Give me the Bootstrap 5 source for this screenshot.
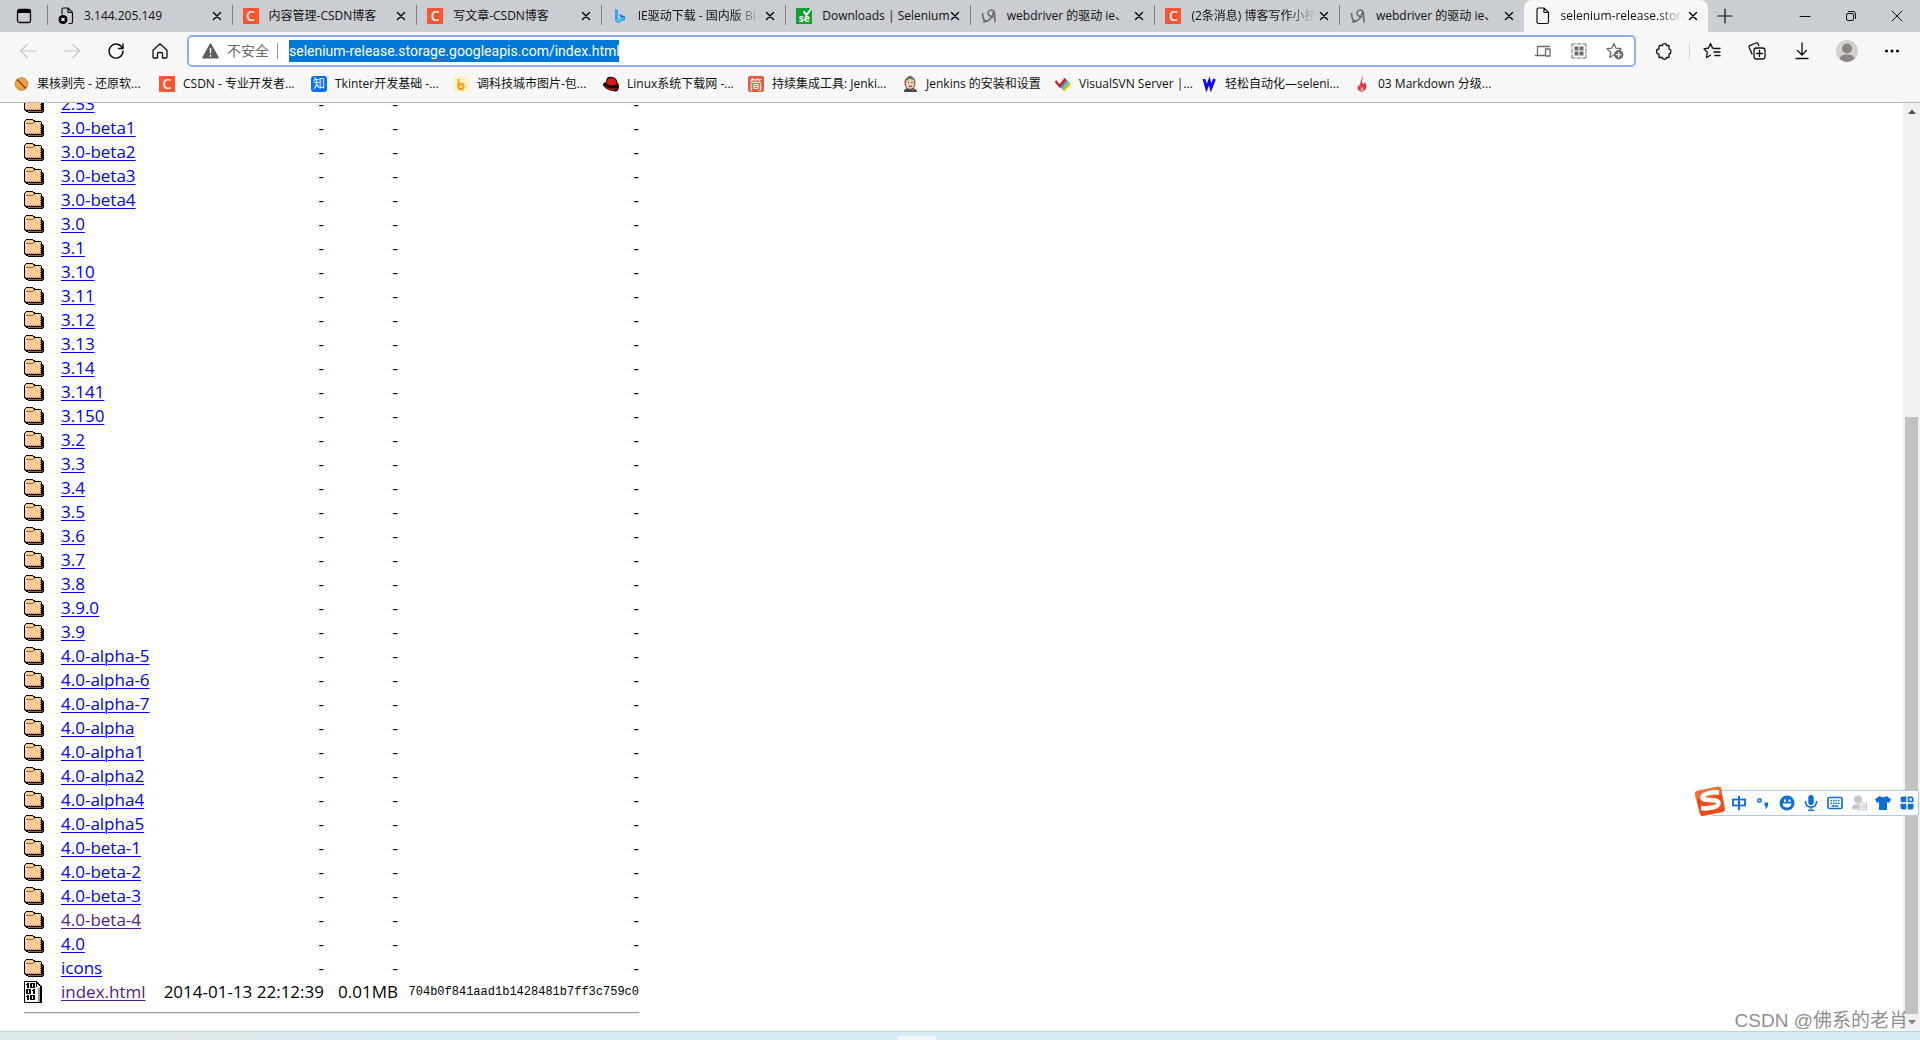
<!DOCTYPE html>
<html lang="zh-CN">
<head>
<meta charset="utf-8">
<meta name="viewport" content="width=device-width, initial-scale=1">
<title>selenium-release.storage.googleapis.com/index.html</title>
<link href="https://cdn.jsdelivr.net/npm/bootstrap@5.3.0/dist/css/bootstrap.min.css" rel="stylesheet">
<style>
  body { font: 12px/16px "Open Sans", "Noto Sans CJK SC", sans-serif; color: #111; background: #fff; }
  button { border: 0; background: none; padding: 0; color: #111; }
  svg { display: block; flex: none; }
  .ln { fill: none; stroke: currentColor; stroke-linecap: round; stroke-linejoin: round; }

  .tabstrip { height: 32px; background: #cacdd1; }
  .tab-menu { width: 47px; flex: none; }
  .tabs-row { flex: 1 1 0; min-width: 0; }
  .tab-item { flex: 1 1 0; min-width: 0; padding: 0 6px 0 10px; border-left: 1px solid transparent; position: relative; }
  .tab-item::before { content: ""; position: absolute; left: -1px; top: -2px; height: 20px; width: 1px; background: #7e8082; }
  .tab-item.current { background: #f7f7f7; border-radius: 8px 8px 0 0; height: 32px; }
  .tab-item.current::before { display: none; }
  .tab-title { flex: 1 1 0; min-width: 0; margin-left: 10px; white-space: nowrap; color: #111; text-decoration: none; }
  .tab-title.fade-end { -webkit-mask-image: linear-gradient(to right, #000 78%, transparent); mask-image: linear-gradient(to right, #000 78%, transparent); }
  .tab-close { width: 18px; height: 18px; flex: none; }
  .win-area { width: 212px; flex: none; }
  .win-area .new-tab { width: 34px; }
  .win-area .win-btn { width: 46px; }

  .toolbar { height: 38px; background: #f7f7f7; padding: 0 6px; }
  .tool-btn { width: 44px; height: 32px; display: flex; align-items: center; justify-content: center; flex: none; }
  .tool-btn:disabled { color: #c4c4c4; }
  .tool-gap { column-gap: 1px; }
  .address { height: 32px; margin: 0 5px; border: 2px solid #8fb0ea; border-radius: 5px; background: #fff; padding: 0 1px 0 13px; }
  .site-state { color: #6b6b6b; font-size: 14px; line-height: 20px; }
  .url-input { width: 330px; height: 22px; border: 0; padding: 0; background: #0078d7; color: #fff; font: 14px/22px Roboto, sans-serif; outline: 0; }
  .address .tool-btn { width: 36px; color: #6b6b6b; }
  .rule-v { width: 1px; height: 16px; background: #cfcfcf; }
  .rule-url { background: #9a9a9a; margin: 0 11px 0 8px; }

  .bookmarks { height: 33px; background: #f7f7f7; border-bottom: 1px solid #b9b9b9; padding: 0 14px 4px; display: grid; align-items: center;
    grid-template-columns: 145px 152px 142px 150px 145px 154px 153px 146px 153px 150px; }
  .bookmarks a { color: #111; text-decoration: none; white-space: nowrap; display: flex; align-items: center; gap: 8px; }
  .fav { width: 16px; height: 16px; flex: none; display: flex; align-items: center; justify-content: center; color: #fff; font: 14px/16px "Noto Sans", "Noto Sans CJK SC", sans-serif; }
  .fav-csdn { background: #fc5531; font-weight: 500; }
  .fav-zhi { background: #0a6cff; border-radius: 3px; font-size: 12px; }
  .fav-jian { background: #e4593f; border-radius: 2px; font-size: 13px; }
  .fav-se { background: #0fa12c; font-size: 10px; font-weight: 700; position: relative; padding-top: 4px; }
  .fav-se svg { position: absolute; right: 0; top: 0; }

  .viewport { min-height: 0; }
  .listing { min-height: 0; overflow: hidden; padding: 0 24px 17px; }
  .files { font: 17px/24px "Open Sans", "Noto Sans", sans-serif; color: #000; border-collapse: collapse; table-layout: fixed; width: 615px; flex: none; }
  .files td { padding: 0; height: 24px; white-space: nowrap; text-align: right; }
  .files td.ic { vertical-align: middle; }
  .files td.nm { text-align: left; }
  .files .c-icon { width: 37px; } .files .c-name { width: 89px; } .files .c-date { width: 174px; } .files .c-size { width: 74px; }
  .files a { color: #0000ee; text-decoration: underline; text-underline-offset: 2px; text-decoration-thickness: 1px; }
  .files a.seen { color: #551a8b; }
  .files .hash { font: 12px/24px "Liberation Mono", monospace; }
  .end-rule { width: 615px; height: 2px; margin-top: 8px; background: #9a9a9a; border-bottom: 1px solid #e8e8e8; flex: none; }

  .sbar { width: 17px; background: #f1f1f1; flex: none; }
  .sbar button { height: 17px; display: flex; align-items: center; justify-content: center; }
  .sbar .thumb { margin: auto 2px 0; height: 66.8%; background: #c1c1c1; }

  .shelf { height: 9px; flex: none; background: linear-gradient(to right, #dbe9e8, #e0e6e8 10%, #d5eaf1 20%, #d5eaf1); border-top: 1px solid #bdd3da; padding: 4px 0 0 898px; }
  .shelf span { display: block; width: 38px; height: 4px; background: #f2f8fa; border-radius: 3px 3px 0 0; }

  .ime { position: absolute; right: 1px; bottom: 223px; width: 224px; height: 27px; }
  .ime-bar { margin-left: 16px; padding-left: 15px; height: 26px; background: #fff; border: 1px solid #afc8e4; border-radius: 2px; overflow: hidden; }
  .ime-bar button { width: 24px; height: 24px; flex: none; display: flex; align-items: center; justify-content: center; color: #0b6fd6; }
  .ime-logo { position: absolute; left: -1px; top: -4px; }
  .wmark { position: absolute; right: 12px; bottom: 7px; font: 19px/24px "Liberation Sans", "Noto Sans CJK SC", sans-serif; color: #8f8f8f; white-space: nowrap; }
</style>
</head>
<body class="vh-100 overflow-hidden d-flex flex-column position-relative">

<svg width="0" height="0" class="position-absolute" aria-hidden="true">
  <symbol id="i-close" viewBox="0 0 18 18"><path class="ln" d="M5.5 5.5l7 7M12.5 5.5l-7 7" stroke-width="1.5"/></symbol>
  <symbol id="i-folder" viewBox="0 0 20 18" shape-rendering="crispEdges">
    <path fill="#000" d="M2 0h7v1h2v1h6v1h1v2h1v1h1v11h-1v1H4v-1H2v-1H1v-1H0V2h1V1h1z"/>
    <path fill="#fc9" d="M2 1h7v1h1v1h7v12H2v-1H1V2h1z"/>
    <path fill="#963" d="M2 4h7v1H2zM9 3h2v1H9zM16 5h1v1h-1zM16 7h1v1h-1zM16 9h1v1h-1zM16 11h1v1h-1zM16 13h1v1h-1zM3 14h1v1H3zM5 14h1v1H5zM7 14h1v1H7zM9 14h1v1H9zM11 14h1v1h-1zM13 14h1v1h-1zM15 14h1v1h-1zM4 16h14v-1h1v1h-1v1H4z"/>
  </symbol>
  <symbol id="i-binary" viewBox="0 0 18 22" shape-rendering="crispEdges">
    <path fill="#000" d="M0 0h12l6 6v16H0z"/><path fill="#fff" d="M1 1h11v5h4v15H1z"/>
    <path fill="#999" d="M14 7h2v14h-2z"/><path fill="#fff" d="M13 2l3 4h-3z"/>
    <g fill="#000"><rect x="3" y="2" width="2" height="5"/><rect x="2" y="3" width="1" height="1"/><rect x="6" y="2" width="5" height="5"/><rect x="2" y="8" width="5" height="5"/><rect x="9" y="8" width="2" height="5"/><rect x="8" y="9" width="1" height="1"/><rect x="3" y="14" width="2" height="5"/><rect x="2" y="15" width="1" height="1"/><rect x="6" y="14" width="5" height="5"/></g>
    <g fill="#fff"><rect x="8" y="3" width="1" height="3"/><rect x="4" y="9" width="1" height="3"/><rect x="8" y="15" width="1" height="3"/></g>
  </symbol>
  <symbol id="i-leaf" viewBox="0 0 16 16"><path d="M1.500 5c.5 3.500 0 8 3.500 8 4 0 7-5 7.500-9M12.500 9C9 9 6.500 7 7 4.500 7.500 2 11.500 1 13 3.500c1.200 3 .5 7 1 11M2 13.500q3 1 5-1" fill="none" stroke="#666" stroke-width="1.500"/></symbol>
  <symbol id="i-bing" viewBox="0 0 16 16"><path d="M3 1l3 1v9l-3 2z" fill="#2fa6f5"/><path d="M7 6l6 2.500v3L6 15l-3-2 6-3z" fill="#1473e6"/><path d="M6 11l4-2 3 1-6 5-4-2z" fill="#46c2ee"/></symbol>
</svg>

<header class="flex-shrink-0">
  <div class="tabstrip d-flex align-items-center">
    <button class="tab-menu d-flex justify-content-center" aria-label="标签操作菜单"><svg width="16" height="16" viewBox="0 0 16 16"><rect x="1.500" y="1.500" width="13" height="13" rx="2" class="ln" stroke-width="1.300"/><path d="M1.500 3.500a2 2 0 0 1 2-2h9a2 2 0 0 1 2 2V5h-13z"/></svg></button>
    <nav class="tabs-row d-flex align-items-center" aria-label="标签页">
      <div class="tab-item d-flex align-items-center"><svg width="16" height="18" viewBox="0 0 16 18"><path d="M4 7V2.500Q4 1 5.500 1H10l4.500 4.500V15q0 1.500-1.500 1.500h-2M10 1v4.500h4.500" class="ln" stroke-width="1.200"/><circle cx="5" cy="12.500" r="4.500"/><path d="M3.500 11l3 3M6.500 11l-3 3" stroke="#fff" stroke-width="1.200"/></svg><a class="tab-title" href="#">3.144.205.149</a><button class="tab-close" aria-label="关闭"><svg width="18" height="18"><use href="#i-close"/></svg></button></div>
      <div class="tab-item d-flex align-items-center"><span class="fav fav-csdn">C</span><a class="tab-title" href="#">内容管理-CSDN博客</a><button class="tab-close" aria-label="关闭"><svg width="18" height="18"><use href="#i-close"/></svg></button></div>
      <div class="tab-item d-flex align-items-center"><span class="fav fav-csdn">C</span><a class="tab-title" href="#">写文章-CSDN博客</a><button class="tab-close" aria-label="关闭"><svg width="18" height="18"><use href="#i-close"/></svg></button></div>
      <div class="tab-item d-flex align-items-center"><svg width="16" height="16"><use href="#i-bing"/></svg><a class="tab-title fade-end" href="#">IE驱动下载 - 国内版 Bi</a><button class="tab-close" aria-label="关闭"><svg width="18" height="18"><use href="#i-close"/></svg></button></div>
      <div class="tab-item d-flex align-items-center"><span class="fav fav-se">se<svg width="11" height="9" viewBox="0 0 11 9"><path d="M3 4l2.500 3L10 1" class="ln" stroke-width="2"/></svg></span><a class="tab-title" href="#">Downloads | Selenium</a><button class="tab-close" aria-label="关闭"><svg width="18" height="18"><use href="#i-close"/></svg></button></div>
      <div class="tab-item d-flex align-items-center"><svg width="16" height="16"><use href="#i-leaf"/></svg><a class="tab-title" href="#">webdriver 的驱动 ie、</a><button class="tab-close" aria-label="关闭"><svg width="18" height="18"><use href="#i-close"/></svg></button></div>
      <div class="tab-item d-flex align-items-center"><span class="fav fav-csdn">C</span><a class="tab-title fade-end" href="#">(2条消息) 博客写作小技</a><button class="tab-close" aria-label="关闭"><svg width="18" height="18"><use href="#i-close"/></svg></button></div>
      <div class="tab-item d-flex align-items-center"><svg width="16" height="16"><use href="#i-leaf"/></svg><a class="tab-title" href="#">webdriver 的驱动 ie、</a><button class="tab-close" aria-label="关闭"><svg width="18" height="18"><use href="#i-close"/></svg></button></div>
      <div class="tab-item current d-flex align-items-center"><svg width="16" height="18" viewBox="0 0 16 18"><path d="M3.500 1H9l4.500 4.500V15q0 1.500-1.500 1.500H3.500Q2 16.500 2 15V2.500Q2 1 3.500 1zM9 1v4.500h4.500" class="ln" stroke-width="1.200"/></svg><a class="tab-title fade-end" href="#">selenium-release.stora</a><button class="tab-close" aria-label="关闭"><svg width="18" height="18"><use href="#i-close"/></svg></button></div>
    </nav>
    <div class="win-area d-flex align-items-center">
      <button class="new-tab d-flex justify-content-center" aria-label="新建标签页"><svg width="16" height="16"><path d="M8 1v14M1 8h14" class="ln" stroke-width="1.200"/></svg></button>
      <div class="d-flex ms-auto">
        <button class="win-btn d-flex justify-content-center" aria-label="最小化"><svg width="12" height="12"><path d="M1 6.500h10" class="ln"/></svg></button>
        <button class="win-btn d-flex justify-content-center" aria-label="还原"><svg width="12" height="12"><rect x="1.500" y="3.500" width="7" height="7" rx="1.500" class="ln"/><path d="M3.500 1.500H8a2.500 2.500 0 0 1 2.500 2.500v4.500" class="ln"/></svg></button>
        <button class="win-btn d-flex justify-content-center" aria-label="关闭窗口"><svg width="12" height="12"><path d="M1 1l10 10M11 1L1 11" class="ln"/></svg></button>
      </div>
    </div>
  </div>

  <div class="toolbar d-flex align-items-center">
    <button class="tool-btn" disabled aria-label="后退"><svg width="18" height="16"><path d="M17 8H1.500M8 1.500L1.500 8 8 14.500" class="ln" stroke-width="1.200"/></svg></button>
    <button class="tool-btn" disabled aria-label="前进"><svg width="18" height="16"><path d="M1 8h15.500M10 1.500L16.500 8 10 14.500" class="ln" stroke-width="1.200"/></svg></button>
    <button class="tool-btn" aria-label="刷新"><svg width="18" height="18"><path d="M15.500 6.500A7 7 0 1 0 16 9M16 2v4.500h-4.500" class="ln" stroke-width="1.400"/></svg></button>
    <button class="tool-btn" aria-label="主页"><svg width="18" height="18"><path d="M2 8.200L9 1.800l7 6.400V15a1 1 0 0 1-1 1h-3.500v-4.500q0-1-1-1h-3q-1 0-1 1V16H3a1 1 0 0 1-1-1z" class="ln" stroke-width="1.300"/></svg></button>
    <div class="address d-flex align-items-center flex-grow-1">
      <svg width="17" height="16" viewBox="0 0 17 16"><path d="M7.500 1.200q1-1.600 2 0l7 12.800q.5 1.500-1 1.500h-14q-1.500 0-1-1.500z" fill="#5c5c5c"/><path d="M8.500 5v5.500M8.500 12v1.700" stroke="#fff" stroke-width="1.400"/></svg>
      <label class="site-state ms-2" for="url">不安全</label>
      <span class="rule-v rule-url"></span>
      <input id="url" class="url-input" type="text" value="selenium-release.storage.googleapis.com/index.html">
      <div class="d-flex ms-auto">
        <button class="tool-btn" aria-label="发送到设备"><svg width="16" height="14"><path d="M2.500 11V2.500h12M.5 11.500h9" class="ln" stroke-width="1.300"/><rect x="10.500" y="5" width="4.500" height="7" class="ln" stroke-width="1.300"/></svg></button>
        <button class="tool-btn" aria-label="二维码"><svg width="16" height="16"><path d="M1 4V1h3M12 1h3v3M15 12v3h-3M4 15H1v-3M6 1h4M6 15h4M1 6v4M15 6v4" class="ln"/><path d="M3.500 3.500h4v4h-4zM8.500 3.500h4v4h-4zM3.500 8.500h4v4h-4zM8.500 8.500h4v4h-4z" fill="currentColor"/></svg></button>
        <button class="tool-btn" aria-label="收藏此页"><svg width="18" height="18"><path d="M8 1.500l2 4.700 5 .5-3.700 3.400M8 12.800L3.700 15.500l1.100-5.300L1 6.700l5-.5 2-4.700" class="ln" stroke-width="1.200"/><circle cx="12.700" cy="12.700" r="4.700" fill="currentColor"/><path d="M12.700 10v5.400M10 12.700h5.400" stroke="#fff" stroke-width="1.300"/></svg></button>
      </div>
    </div>
    <button class="tool-btn" aria-label="扩展"><svg width="17" height="17"><path d="M5 2.500h2.500a2 1.800 0 0 1 4 0H14V6q2 .3 2 2.500T14 11v3.500h-2.500a2 1.800 0 0 1-4 0H4v-3.300Q1.500 11 1.500 8.500T4 6V3.500q0-1 1-1z" class="ln" stroke-width="1.300"/><path d="M14 6q-2 .3-2 2.500t2 2.500" class="ln" stroke="#f7f7f7" stroke-width="0"/></svg></button>
    <span class="rule-v ms-1"></span>
    <div class="tool-gap d-flex">
      <button class="tool-btn" aria-label="收藏夹"><svg width="18" height="18"><path d="M10 6H9.500L7.500 1.500 5.500 6 1 6.800l3.300 3.300L3.500 15.500l4-2.300M11 6.500h6M11 10h6M12 13.500h5" class="ln" stroke-width="1.300"/></svg></button>
      <button class="tool-btn" aria-label="集锦"><svg width="18" height="18"><rect x="6" y="6" width="11" height="11" rx="2.500" class="ln" stroke-width="1.300"/><path d="M11.500 8.500v6M8.500 11.500h6M4 12L1.200 5.500q-.6-1.500.9-2.200L8 1q1.600-.5 2.200.9L10.800 3.500" class="ln" stroke-width="1.300"/></svg></button>
      <button class="tool-btn" aria-label="下载"><svg width="16" height="18"><path d="M8 1v11.500M3.500 8.500L8 13l4.500-4.500M2 16.500h12" class="ln" stroke-width="1.300"/></svg></button>
      <button class="tool-btn" aria-label="个人资料"><svg width="22" height="22"><circle cx="11" cy="11" r="11" fill="#d3d1ce"/><circle cx="11" cy="8.500" r="5" fill="#8b8683"/><path d="M3.500 18.800c1-3.300 3.700-4.300 7.500-4.300s6.500 1 7.500 4.300A11 11 0 0 1 11 22a11 11 0 0 1-7.500-3.200z" fill="#8b8683"/></svg></button>
      <button class="tool-btn" aria-label="设置及其他"><svg width="16" height="4"><circle cx="2.500" cy="2" r="1.500"/><circle cx="8" cy="2" r="1.500"/><circle cx="13.500" cy="2" r="1.500"/></svg></button>
    </div>
  </div>

  <nav class="bookmarks" aria-label="收藏夹栏">
    <a href="#"><svg width="15" height="16"><circle cx="7.500" cy="8" r="6.300" fill="#f2a03c" stroke="#b98a58"/><path d="M3 3.500l9 9" stroke="#6c4b2c" stroke-width="1.300"/></svg>果核剥壳 - 还原软...</a>
    <a href="#"><span class="fav fav-csdn">C</span>CSDN - 专业开发者...</a>
    <a href="#"><span class="fav fav-zhi">知</span>Tkinter开发基础 -...</a>
    <a href="#"><svg width="16" height="16"><rect width="16" height="16" fill="#fff1c9"/><path d="M5.500 3v7.500" stroke="#f7b500" stroke-width="2.200"/><circle cx="8" cy="10.500" r="2.600" fill="none" stroke="#f79a1c" stroke-width="2.200"/></svg>调科技城市图片-包...</a>
    <a href="#"><svg width="16" height="16"><path d="M0 9c0-2 2-3 3-2.500C3 2 5 .5 8 .8s6 1.500 6.500 5.700c2 2 2 5 .5 7.500-1 2-3 1.500-5 1C6 14.500 2 13 0 9z" fill="#1b0d0d"/><path d="M3.500 7C4 3 6 1.500 8.500 2c3.500.4 5 2.500 5 6-3 2.500-8 1.500-10-1z" fill="#e01515"/><path d="M1 9c3 3 8 4.500 13 3l-2 2c-4 .5-9-1-11-5z" fill="#d11"/></svg>Linux系统下载网 -...</a>
    <a href="#"><span class="fav fav-jian">简</span>持续集成工具: Jenki...</a>
    <a href="#"><svg width="16" height="16"><path d="M2 16c0-3 2-4 6-4s7 1 7 4z" fill="#3c4a56"/><ellipse cx="8" cy="7" rx="5" ry="6.500" fill="#e7cfae" stroke="#57493c"/><path d="M3 7C2 3 5 .5 8 .5S13 2 13 5C10 2 5 2 3 7z" fill="#7c7468"/><path d="M6 6.500h1M9.500 6.500h1M7 10q1.500 1 3 0" stroke="#40342a" fill="none"/><path d="M8 13l4-1v3.500z" fill="#d33833"/></svg>Jenkins 的安装和设置</a>
    <a href="#"><svg width="16" height="16" viewBox="0 0 16 16"><path d="M.5 5l4 5 6-7.500" stroke="#c8202f" stroke-width="2.200" fill="none"/><path d="M5 11.500L11.500 4" stroke="#6b4fa0" stroke-width="1.600"/><path d="M6.500 12.500L13 5" stroke="#35a6b5" stroke-width="1.800"/><path d="M8 14l6.500-7.500" stroke="#8a9a3c" stroke-width="1.600"/><path d="M9 15.200l6.500-7.200" stroke="#f5d90a" stroke-width="1.800"/></svg>VisualSVN Server |...</a>
    <a href="#"><svg width="16" height="16"><path d="M3 3l2.500 9 2.800-7 1.700 7 3.500-9" fill="none" stroke="#0a0af5" stroke-width="2.800"/></svg>轻松自动化—seleni...</a>
    <a href="#"><svg width="16" height="16"><path d="M8.500 0c1 3-1 4-.5 6.500l1.500 2L10.800 6C13 9 13.500 14 8 15.800 2.500 15 3 10.500 5.500 8 5 10 6 11 6.500 11 5 7 8 4 8.500 0z" fill="#e2383b"/><path d="M8 15.500c-2-1-2-3 0-4.500 2 1.500 2 3.500 0 4.500z" fill="#f7b5a8"/></svg>03 Markdown 分级...</a>
  </nav>
</header>

<div class="viewport d-flex flex-grow-1">
  <main class="listing d-flex flex-column justify-content-end flex-grow-1">
    <table class="files">
      <colgroup><col class="c-icon"><col class="c-name"><col class="c-date"><col class="c-size"><col></colgroup>
      <tbody id="rows"></tbody>
    </table>
    <div class="end-rule"></div>
  </main>
  <div class="sbar d-flex flex-column">
    <button aria-label="向上滚动"><svg width="8" height="5"><path d="M0 5l4-4.500L8 5z" fill="#505050"/></svg></button>
    <div class="d-flex flex-column flex-grow-1"><div class="thumb"></div></div>
    <button aria-label="向下滚动"><svg width="8" height="5"><path d="M0 0l4 4.500L8 0z" fill="#808080"/></svg></button>
  </div>
</div>

<footer class="shelf"><span></span></footer>

<div class="ime">
  <div class="ime-bar d-flex align-items-center">
    <button aria-label="中文"><svg width="14" height="14"><rect x="1" y="3.500" width="12" height="6" fill="none" stroke="currentColor" stroke-width="1.800"/><path d="M7 0v14" stroke="currentColor" stroke-width="2"/></svg></button>
    <button aria-label="标点"><svg width="14" height="14"><circle cx="3.500" cy="4.500" r="1.700" class="ln" stroke-width="1.500"/><path d="M8.500 6.500h3.500V9.500q-.5 3-3 3.500l1-3H8.500z" fill="currentColor"/></svg></button>
    <button aria-label="表情"><svg width="16" height="16"><circle cx="8" cy="8" r="7.500" fill="currentColor"/><path d="M5 4.500h2v2.500H5zM9.500 4.500h2v2.500h-2zM3.500 8.500h9q-.5 4-4.500 4t-4.500-4z" fill="#fff"/></svg></button>
    <button aria-label="语音"><svg width="14" height="16"><rect x="4.300" y="0" width="5.400" height="10" rx="2.700" fill="currentColor"/><path d="M1.500 6.500q0 5.500 5.500 5.500t5.500-5.500" class="ln" stroke-width="1.600"/><path d="M7 12v2M4 15.200h6" stroke="currentColor" stroke-width="1.600"/></svg></button>
    <button aria-label="键盘"><svg width="16" height="14"><rect x="1" y="1.500" width="14" height="11" rx="1.500" class="ln" stroke-width="1.700"/><path d="M3.500 4.500h9M3.500 7.200h9" stroke="currentColor" stroke-width="1.500" stroke-dasharray="1.600 .9"/><path d="M4.500 10h7" stroke="currentColor" stroke-width="1.500"/></svg></button>
    <button aria-label="账户"><svg width="16" height="16"><circle cx="7" cy="4.500" r="4" fill="#c8c8c8"/><path d="M.5 14.500q0-5.500 6.500-5.500h2v5.500z" fill="#c8c8c8"/><rect x="8" y="8" width="7.500" height="7" fill="#fff" stroke="#c8c8c8"/><path d="M10 9.500v4" stroke="#c8c8c8"/><rect x="12" y="10" width="2" height="3" fill="none" stroke="#c8c8c8"/></svg></button>
    <button aria-label="皮肤"><svg width="16" height="14"><path d="M4.500 0q3.500 2.500 7 0L16 3.200 14 7l-2-1v8H4V6L2 7 0 3.200z" fill="currentColor"/></svg></button>
    <button aria-label="工具箱"><svg width="14" height="14" fill="currentColor"><path d="M2.500.5H6.300V6.300H2.500Q.5 6.300.5 3.400T2.500.5zM.5 7.700h5.800v5.800H3Q.5 13.500.5 11zM7.700 7.700h5.800V11q0 2.500-2.500 2.500H7.700z"/><path d="M8.500 1.300h3q1.200 0 1.200 1.700v2.500H8.500z" fill="none" stroke="currentColor" stroke-width="1.700"/></svg></button>
  </div>
  <svg class="ime-logo" width="33" height="31" viewBox="0 0 33 31"><path d="M3 5L24 .8q2.500-.4 3.100 2L31 23q.4 2.400-2 3.100L9 30q-2.500.5-3.200-2L1 8q-.3-2.400 2-3z" fill="#ee4d1b"/><path d="M3 5L24 .8q2.500-.4 3.100 2L28 8 2 13 1 8q-.3-2.400 2-3z" fill="#f76b34"/><path d="M25 6.500C17 5.500 8 8 8.500 12c.5 3.500 16 .5 16 5 0 4.500-11 6-17.500 5" fill="none" stroke="#fff" stroke-width="4.600"/></svg>
</div>
<div class="wmark">CSDN @佛系的老肖</div>

<script>
  const folders = ["2.53","3.0-beta1","3.0-beta2","3.0-beta3","3.0-beta4","3.0","3.1","3.10","3.11","3.12","3.13","3.14","3.141","3.150","3.2","3.3","3.4","3.5","3.6","3.7","3.8","3.9.0","3.9","4.0-alpha-5","4.0-alpha-6","4.0-alpha-7","4.0-alpha","4.0-alpha1","4.0-alpha2","4.0-alpha4","4.0-alpha5","4.0-beta-1","4.0-beta-2","4.0-beta-3","4.0-beta-4","4.0","icons"];
  const visited = ["4.0-beta-4"];
  const row = (icon, h, name, seen, a, b, c, cls) =>
    `<tr><td class="ic"><svg width="${icon === "folder" ? 20 : 18}" height="${h}"><use href="#i-${icon}"/></svg></td><td class="nm"><a href="#"${seen ? ' class="seen"' : ""}>${name}</a></td><td>${a}</td><td>${b}</td><td${cls}>${c}</td></tr>`;
  document.getElementById("rows").innerHTML =
    folders.map(f => row("folder", 18, f, visited.includes(f), "-", "-", "-", "")).join("") +
    row("binary", 22, "index.html", true, "2014-01-13 22:12:39", "0.01MB", "704b0f841aad1b1428481b7ff3c759c0", ' class="hash"');
</script>
<script src="https://cdn.jsdelivr.net/npm/bootstrap@5.3.0/dist/js/bootstrap.bundle.min.js"></script>
</body>
</html>
